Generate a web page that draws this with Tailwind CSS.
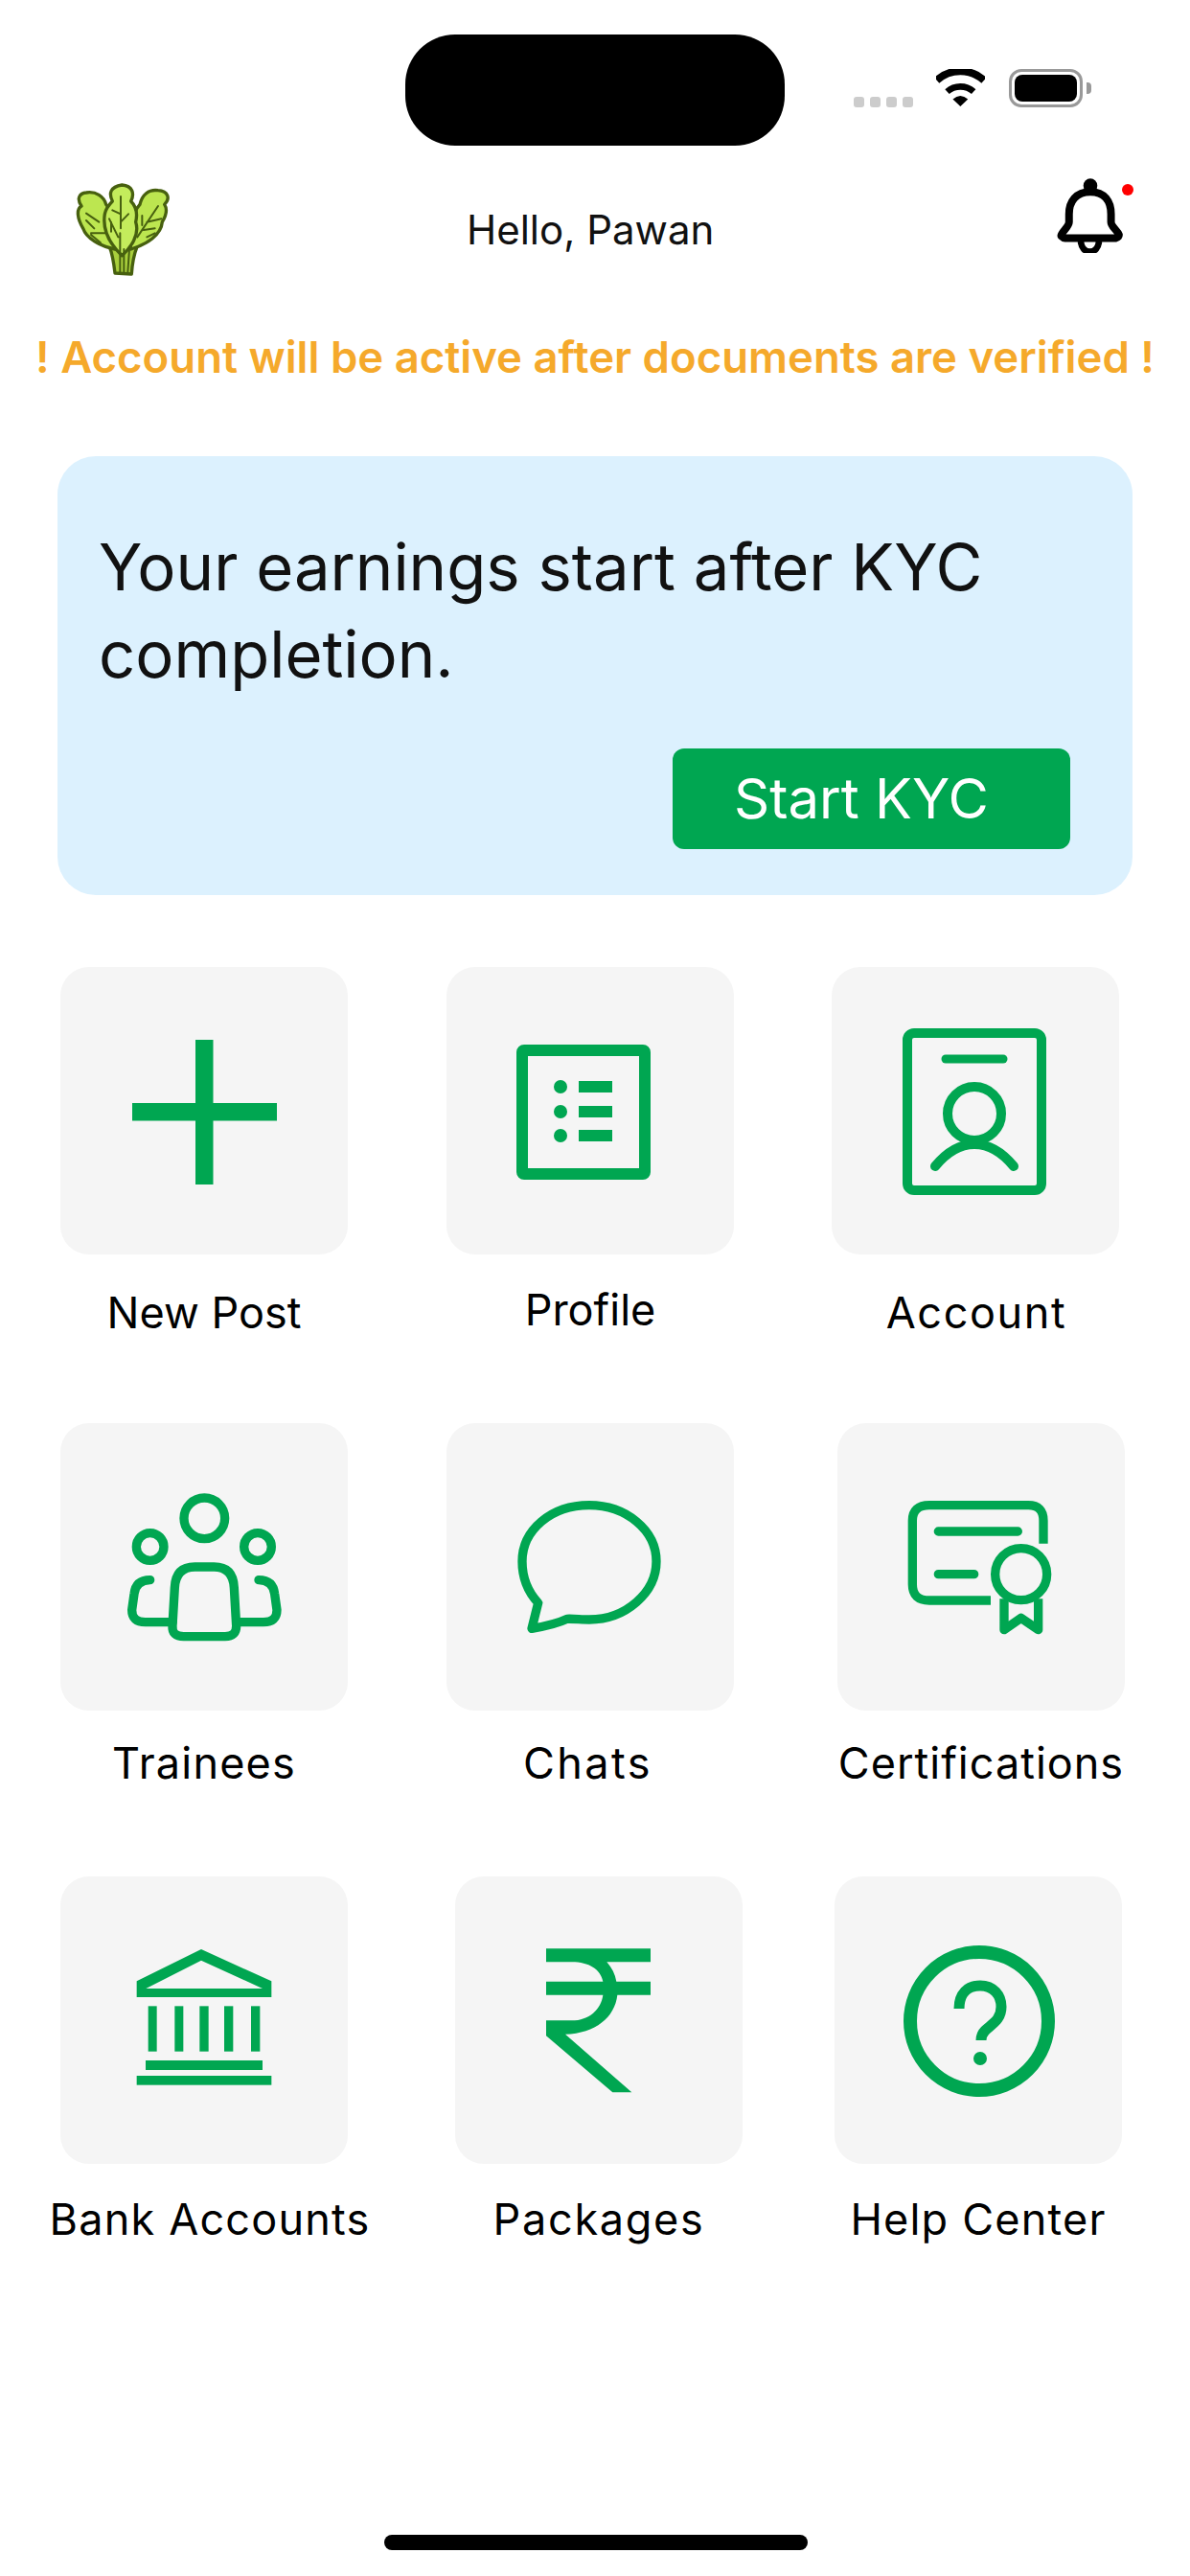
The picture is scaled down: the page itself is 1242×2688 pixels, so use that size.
<!DOCTYPE html>
<html lang="en">
<head>
<meta charset="utf-8">
<title>Home</title>
<script src="https://cdn.jsdelivr.net/npm/@tailwindcss/browser@4"></script>
</head>
<body class="bg-white">
<div class="relative w-[1242px] h-[2688px] bg-white flex flex-col font-['Inter',sans-serif] text-black overflow-hidden">

  <!-- status bar -->
  <div class="flex h-[152px] pt-[36px] shrink-0">
    <div class="ml-[423px] w-[396px] h-[116px] rounded-[52px] bg-black"></div>
    <div class="ml-[72px] mt-[65px] flex gap-[6px] h-[11px]">
      <span class="w-[11px] h-[11px] rounded-[3px] bg-[#cccccc]"></span>
      <span class="w-[11px] h-[11px] rounded-[3px] bg-[#cccccc]"></span>
      <span class="w-[11px] h-[11px] rounded-[3px] bg-[#cccccc]"></span>
      <span class="w-[11px] h-[11px] rounded-[3px] bg-[#cccccc]"></span>
    </div>
    <svg class="ml-[24px] mt-[36px]" width="51" height="40" viewBox="350 97 155 120">
      <path d="M352 132A112 112 0 0 1 502 132" fill="none" stroke="#000" stroke-width="24"/>
      <path d="M385 168A63 63 0 0 1 469 168" fill="none" stroke="#000" stroke-width="20"/>
      <path d="M403 192Q427 170 451 192L427 215Z" fill="#000"/>
    </svg>
    <div class="ml-[25px] mt-[36px] flex items-center h-[40px]">
      <div class="w-[77px] h-[40px] rounded-[13px] border-[3px] border-[#999999] p-[3px]">
        <div class="w-full h-full rounded-[8px] bg-black"></div>
      </div>
      <div class="ml-[4px] w-[5px] h-[12px] rounded-r-[4px] bg-[#999999]"></div>
    </div>
  </div>

  <!-- header -->
  <div class="relative flex items-start h-[130px] shrink-0 mt-[8px]">
    <svg class="ml-[40px]" width="160" height="140" viewBox="0 0 480 420">
      <g stroke="#47600f" stroke-width="10" stroke-linejoin="round" stroke-linecap="round">
        <path d="M240 375C236 340 232 315 222 290L310 290C298 320 294 345 292 378Z" fill="#a9cf3c"/>
        <path d="M240 300C190 290 150 265 140 235C122 205 118 175 135 165C118 140 130 125 150 123C180 118 205 135 212 160C240 190 250 250 240 300Z" fill="#bce650"/>
        <path d="M290 300C340 285 385 255 388 215C400 195 405 175 395 160C415 140 405 118 375 116C345 112 325 130 318 160C290 190 280 250 290 300Z" fill="#bce650"/>
        <path d="M262 320C225 285 200 240 208 190C212 170 222 160 232 150C220 125 225 105 262 99C295 102 302 125 290 150C305 165 312 185 305 215C318 255 290 295 262 320Z" fill="#c4ec5c"/>
      </g>
      <g fill="none" stroke="#47600f" stroke-width="6" stroke-linecap="round">
        <path d="M256 372V250M258 135V235M258 190L232 178M258 215L282 190M222 205L250 262M228 215V245"/>
        <path d="M212 250H165M190 215L150 188M175 235L150 210M165 255L195 280"/>
        <path d="M310 262L375 165M340 215L385 205M330 240L365 235M340 262L365 250M325 225V195"/>
        <path d="M268 372V300M280 372L285 300"/>
      </g>
    </svg>
    <p class="ml-[287px] mt-[50px] text-[42px] leading-[60px] whitespace-nowrap text-[#111111]">Hello, Pawan</p>
    <svg class="ml-auto mr-[70px] mt-[26px]" width="69" height="78" viewBox="730 437 207 235">
      <circle cx="835" cy="460" r="22" fill="#000"/>
      <path d="M835 480C790 480 768 510 768 550V575C768 590 745 605 743 618Q750 625 755 625H915Q925 622 925 615C920 600 900 590 900 575V550C900 510 880 480 835 480Z" fill="none" stroke="#000" stroke-width="24" stroke-linejoin="round"/>
      <path d="M805 632C805 680 862 680 862 632" fill="none" stroke="#000" stroke-width="20"/>
    </svg>
    <span class="absolute left-[1171px] top-[32px] w-[12px] h-[12px] rounded-full bg-[#ff0000]"></span>
  </div>

  <!-- warning -->
  <p class="mt-[53px] text-center text-[45.500px] leading-[60px] font-semibold whitespace-nowrap text-[#f5a92b]">! Account will be active after documents are verified !</p>

  <!-- KYC banner -->
  <section class="ml-[60px] mt-[73px] w-[1122px] h-[458px] rounded-[40px] bg-[#dcf1fe] pl-[43px] pt-[70px] flex flex-col">
    <p class="text-[67px] leading-[91px] text-[#111111] w-[1000px]">Your earnings start after KYC completion.</p>
    <div class="mt-[53px] ml-[599px] w-[415px] h-[105px] rounded-[12px] bg-[#00a651] pl-[64px] text-white text-[58px] leading-[105px]">Start KYC</div>
  </section>

  <!-- row 1 -->
  <div class="flex ml-[63px] mt-[75px] gap-[103px]">
    <div class="w-[300px] flex flex-col items-center">
      <div class="w-[300px] h-[300px] rounded-[30px] bg-[#f5f5f5]">
        <svg width="300" height="300" viewBox="0 0 300 300"><path d="M141 76H159.500V142H226V160.500H159.500V227H141V160.500H75V142H141Z" fill="#00a651"/></svg>
      </div>
      <p class="mt-[31px] text-[45px] leading-[60px] whitespace-nowrap">New Post</p>
    </div>
    <div class="w-[300px] flex flex-col items-center">
      <div class="w-[300px] h-[300px] rounded-[30px] bg-[#f5f5f5]">
        <svg width="300" height="300" viewBox="0 0 300 300">
          <rect x="79" y="87" width="128" height="129" rx="2" fill="none" stroke="#00a651" stroke-width="12"/>
          <circle cx="119" cy="125" r="7" fill="#00a651"/><circle cx="119" cy="151" r="7" fill="#00a651"/><circle cx="119" cy="176" r="7" fill="#00a651"/>
          <path d="M138 125H173M138 151H173M138 176H173" stroke="#00a651" stroke-width="12"/>
        </svg>
      </div>
      <p class="mt-[28px] text-[45px] leading-[60px] whitespace-nowrap">Profile</p>
    </div>
    <div class="w-[300px] flex flex-col items-center ml-[-1px]">
      <div class="w-[300px] h-[300px] rounded-[30px] bg-[#f5f5f5]">
        <svg width="300" height="300" viewBox="0 0 300 300" fill="none" stroke="#00a651" stroke-linecap="round">
          <rect x="79" y="69" width="140" height="164" rx="7" stroke-width="10"/>
          <path d="M119 96H179" stroke-width="9"/>
          <circle cx="149" cy="153" r="28" stroke-width="10"/>
          <path d="M108 208C122 191 135 185 149 185C163 185 176 191 190 208" stroke-width="10"/>
        </svg>
      </div>
      <p class="mt-[31px] ml-[2px] text-[45px] leading-[60px] tracking-[1.600px] whitespace-nowrap">Account</p>
    </div>
  </div>

  <!-- row 2 -->
  <div class="flex ml-[63px] mt-[85px]">
    <div class="w-[300px] flex flex-col items-center">
      <div class="w-[300px] h-[300px] rounded-[30px] bg-[#f5f5f5]">
        <svg width="300" height="300" viewBox="0 0 300 300">
          <g transform="translate(37 55) scale(.33333)" fill="none" stroke="#00a651" stroke-width="28" stroke-linecap="round" stroke-linejoin="round">
            <circle cx="340" cy="133" r="64"/>
            <circle cx="170" cy="222" r="43"/>
            <circle cx="507" cy="222" r="43"/>
            <path d="M247 350Q250 285 310 285H370Q430 285 433 350L440 470Q440 503 405 503H275Q238 503 240 470Z"/>
            <path d="M170 326Q125 326 120 370L113 420Q113 458 155 458H240"/>
            <path d="M510 326Q555 326 560 370L567 420Q567 458 525 458H440"/>
          </g>
        </svg>
      </div>
      <p class="mt-[25px] text-[45px] leading-[60px] tracking-[1.200px] whitespace-nowrap">Trainees</p>
    </div>
    <div class="ml-[103px] w-[300px] flex flex-col items-center">
      <div class="w-[300px] h-[300px] rounded-[30px] bg-[#f5f5f5]">
        <svg width="300" height="300" viewBox="0 0 300 300">
          <g transform="translate(44 55) scale(.33333)" fill="none" stroke="#00a651" stroke-width="28" stroke-linejoin="round">
            <path d="M135 478L155 398C120 360 105 320 105 268C105 170 195 92 315 92C430 92 525 170 525 268C525 365 430 450 315 450C290 450 265 447 245 448C210 465 170 472 135 478Z"/>
          </g>
        </svg>
      </div>
      <p class="mt-[25px] mr-[5px] text-[45px] leading-[60px] tracking-[2.400px] whitespace-nowrap">Chats</p>
    </div>
    <div class="ml-[108px] w-[300px] flex flex-col items-center">
      <div class="w-[300px] h-[300px] rounded-[30px] bg-[#f5f5f5]">
        <svg width="300" height="300" viewBox="0 0 300 300">
          <g transform="translate(46 55) scale(.33333)" fill="none" stroke="#00a651" stroke-width="28">
            <path d="M342 390H150Q97 390 97 340V140Q97 92 150 92H460Q507 92 507 140V212"/>
            <path d="M178 174H427M178 308H290" stroke-linecap="round"/>
            <circle cx="437" cy="308" r="81"/>
            <path d="M384 385V482L437 445L491 482V385" stroke-linejoin="round"/>
          </g>
        </svg>
      </div>
      <p class="mt-[25px] text-[45px] leading-[60px] tracking-[1px] whitespace-nowrap">Certifications</p>
    </div>
  </div>

  <!-- row 3 -->
  <div class="flex ml-[63px] mt-[88px]">
    <div class="w-[300px] flex flex-col items-center">
      <div class="w-[300px] h-[300px] rounded-[30px] bg-[#f5f5f5]">
        <svg width="300" height="300" viewBox="0 0 300 300">
          <g transform="translate(57 52) scale(.33333)" fill="#00a651">
            <path fill-rule="evenodd" d="M270 72L490 172V222H68V172ZM270 107L97 195H462Z"/>
            <rect x="104" y="250" width="27" height="142"/><rect x="187" y="250" width="27" height="142"/><rect x="265" y="250" width="28" height="142"/><rect x="342" y="250" width="28" height="142"/><rect x="426" y="250" width="28" height="142"/>
            <rect x="96" y="420" width="366" height="30"/><rect x="68" y="468" width="422" height="29"/>
          </g>
        </svg>
      </div>
      <p class="mt-[28px] ml-[12px] text-[45px] leading-[60px] tracking-[1.200px] whitespace-nowrap">Bank Accounts</p>
    </div>
    <div class="ml-[112px] w-[300px] flex flex-col items-center">
      <div class="w-[300px] h-[300px] rounded-[30px] bg-[#f5f5f5]">
        <svg width="300" height="300" viewBox="0 0 300 300">
          <g transform="translate(65 52) scale(.33333)" fill="#00a651">
            <path d="M90 70H417V112H280C296 130 306 150 310 173H417V215H313C305 285 245 335 150 338L358 520H298L90 343V295H170C225 295 262 260 268 215H90V173H268C260 135 225 112 170 112H90Z"/>
          </g>
        </svg>
      </div>
      <p class="mt-[28px] text-[45px] leading-[60px] tracking-[1.700px] whitespace-nowrap">Packages</p>
    </div>
    <div class="ml-[96px] w-[300px] flex flex-col items-center">
      <div class="w-[300px] h-[300px] rounded-[30px] bg-[#f5f5f5]">
        <svg width="300" height="300" viewBox="0 0 300 300" fill="none" stroke="#00a651">
          <circle cx="151" cy="151" r="72" stroke-width="14"/>
          <path d="M130 138C130 122 139 114 152 114C166 114 174 124 174 136C174 150 164 154 157 161C154 164 153 166 153 171" stroke-width="11"/>
          <circle cx="152" cy="190" r="7" fill="#00a651" stroke="none"/>
        </svg>
      </div>
      <p class="mt-[28px] text-[45px] leading-[60px] tracking-[1.200px] whitespace-nowrap">Help Center</p>
    </div>
  </div>

  <!-- home indicator -->
  <div class="mt-auto mb-[27px] ml-[401px] w-[442px] h-[16px] rounded-full bg-black"></div>
</div>
</body>
</html>
